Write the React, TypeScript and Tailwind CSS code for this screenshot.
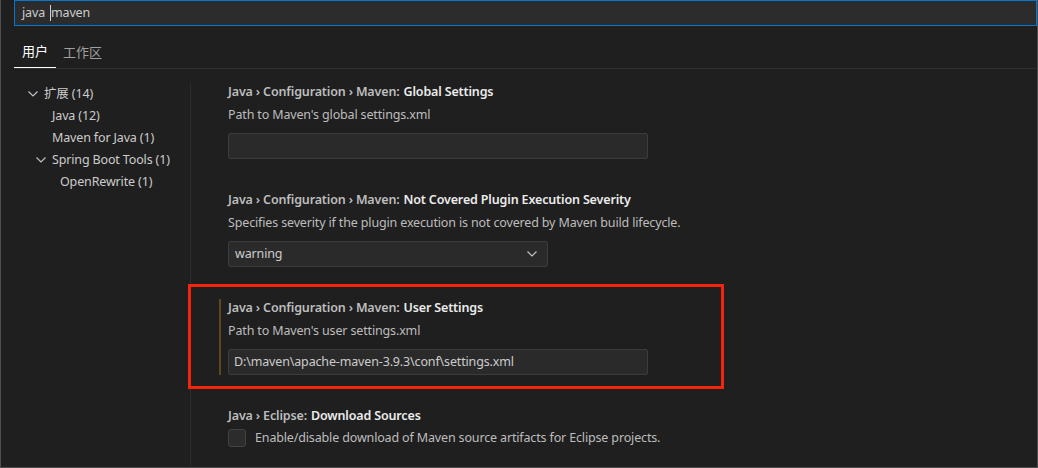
import React from 'react';

const font = { fontFamily: '"Noto Sans", "Noto Sans CJK SC", sans-serif' };

const Chevron = ({ className = '' }: { className?: string }) => (
  <svg className={className} width="10" height="6" viewBox="0 0 10 6" fill="none">
    <path d="M0.5 0.5L5 5L9.5 0.5" stroke="#c5c5c5" strokeWidth="1.1" />
  </svg>
);

interface TreeRow {
  label: string;
  pad: number;
  expand?: boolean;
}

const tree: TreeRow[] = [
  { label: '扩展 (14)', pad: 27, expand: true },
  { label: 'Java (12)', pad: 51 },
  { label: 'Maven for Java (1)', pad: 51 },
  { label: 'Spring Boot Tools (1)', pad: 35, expand: true },
  { label: 'OpenRewrite (1)', pad: 59 },
];

const padClass: Record<number, string> = {
  27: 'pl-[27px]',
  51: 'pl-[51px]',
  35: 'pl-[35px]',
  59: 'pl-[59px]',
};

// Segoe-like width: slightly smaller + tighter than Noto Sans default
const txt = 'text-[12.5px] tracking-[-0.15px]';

const Title = ({ cat, label }: { cat: string; label: string }) => (
  <div className={`h-[18px] flex items-center font-semibold whitespace-nowrap ${txt}`}>
    <span className="text-[#bdbdbd]">{cat}</span>
    <span className="text-[#ececec] ml-[4px]">{label}</span>
  </div>
);

const Desc = ({ children }: { children: React.ReactNode }) => (
  <div className={`h-[18px] mt-[5px] flex items-center text-[#bdbdbd] whitespace-nowrap ${txt}`}>{children}</div>
);

const Setting = ({ focused, children }: { focused?: boolean; children: React.ReactNode }) => (
  <div className="h-[108px] pt-[14px] pl-[28px]">
    <div className={`border-l-2 pl-[7px] ${focused ? 'border-[#5e4718]' : 'border-transparent'}`}>{children}</div>
  </div>
);

export default function App() {
  return (
    <div className="w-[1038px] h-[468px] bg-[#1f1f1f] border-l border-r border-b border-[#4d4d4d] relative overflow-hidden" style={font}>
      {/* search box */}
      <div className={`ml-[13px] h-[26px] border border-[#0078d4] bg-[#2c2c2c] flex items-center pl-[7px] text-[#cccccc] ${txt}`}>
        <span>java</span>
        <span className="w-px h-[16px] bg-[#cfcfcf] ml-[5px]"></span>
        <span>maven</span>
      </div>

      {/* tabs */}
      <div className="ml-[13px] h-[43px] border-b border-[#2f2f2f] flex items-end">
        <div className="h-[42px] w-[42px] border-b border-white flex items-center justify-center text-[13px] text-white pt-[8px]" style={{ fontFamily: '"Noto Sans CJK SC", sans-serif' }}>
          用户
        </div>
        <div className="h-[42px] px-[7px] flex items-center text-[13px] text-[#a0a0a0] pt-[9px]" style={{ fontFamily: '"Noto Sans CJK SC", sans-serif' }}>
          工作区
        </div>
      </div>

      <div className="flex">
        {/* tree */}
        <div className="w-[190px] mt-[14px] h-[400px] border-r border-[#2d2d2d] shrink-0">
          {tree.map((r) => (
            <div key={r.label} className={`h-[22px] flex items-center text-[#cccccc] whitespace-nowrap ${txt} ${padClass[r.pad]}`}>
              {r.expand && <Chevron className="mr-[6px] shrink-0" />}
              <span>{r.label}</span>
            </div>
          ))}
        </div>

        {/* settings list */}
        <div className="flex-1">
          <Setting>
            <Title cat="Java › Configuration › Maven:" label="Global Settings" />
            <Desc>Path to Maven's global settings.xml</Desc>
            <div className="mt-[9px] w-[420px] h-[26px] bg-[#2a2a2a] border border-[#3c3c3c] rounded-[2px]"></div>
          </Setting>

          <Setting>
            <Title cat="Java › Configuration › Maven:" label="Not Covered Plugin Execution Severity" />
            <Desc>Specifies severity if the plugin execution is not covered by Maven build lifecycle.</Desc>
            <div className={`mt-[9px] w-[320px] h-[26px] bg-[#2a2a2a] border border-[#3c3c3c] rounded-[2px] flex items-center justify-between pl-[6px] pr-[10px] text-[#cccccc] ${txt}`}>
              <span>warning</span>
              <Chevron />
            </div>
          </Setting>

          <Setting focused>
            <Title cat="Java › Configuration › Maven:" label="User Settings" />
            <Desc>Path to Maven's user settings.xml</Desc>
            <div className={`mt-[9px] w-[420px] h-[26px] bg-[#2a2a2a] border border-[#3c3c3c] rounded-[2px] flex items-center pl-[5px] text-[#cccccc] whitespace-nowrap ${txt}`}>
              D:\maven\apache-maven-3.9.3\conf\settings.xml
            </div>
          </Setting>

          <Setting>
            <Title cat="Java › Eclipse:" label="Download Sources" />
            <div className="mt-[4px] flex items-center">
              <div className="w-[18px] h-[18px] rounded-[3px] bg-[#2c2c2c] border border-[#434343] shrink-0"></div>
              <span className={`ml-[9px] text-[#bdbdbd] whitespace-nowrap ${txt}`}>
                Enable/disable download of Maven source artifacts for Eclipse projects.
              </span>
            </div>
          </Setting>
        </div>
      </div>

      {/* annotation */}
      <div className="absolute left-[187px] top-[284px] w-[536px] h-[105px] border-[3px] border-[#f5250c] pointer-events-none"></div>
    </div>
  );
}
